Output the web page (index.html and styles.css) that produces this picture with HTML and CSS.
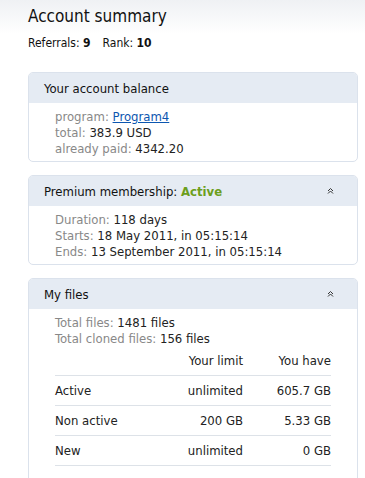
FILE: index.html
```html
<!DOCTYPE html>
<html lang="en">
<head>
    <meta charset="UTF-8">
    <meta name="viewport" content="width=device-width, initial-scale=1.0">
    <title>Account summary</title>
    <link rel="stylesheet" href="styles.css">
</head>
<body>
    <div class="page">
        <h1>Account summary</h1>
        <p class="stats">Referrals: <b>9</b><span class="sep"></span>Rank: <b>10</b></p>

        <div class="box">
            <div class="box-head">Your account balance</div>
            <div class="box-body">
                <div class="row"><span class="lbl">program:</span> <a href="#">Program4</a></div>
                <div class="row"><span class="lbl">total:</span> 383.9 USD</div>
                <div class="row"><span class="lbl">already paid:</span> 4342.20</div>
            </div>
        </div>

        <div class="box">
            <div class="box-head">
                <span>Premium membership: <b class="active">Active</b></span>
                <svg class="toggle" width="7" height="6" viewBox="0 0 7 6"><path d="M1 3 L3.5 0.5 L6 3 M1 5.5 L3.5 3 L6 5.5" fill="none" stroke="#333" stroke-width="1"/></svg>
            </div>
            <div class="box-body">
                <div class="row"><span class="lbl">Duration:</span> 118 days</div>
                <div class="row"><span class="lbl">Starts:</span> 18 May 2011, in 05:15:14</div>
                <div class="row"><span class="lbl">Ends:</span> 13 September 2011, in 05:15:14</div>
            </div>
        </div>

        <div class="box">
            <div class="box-head">
                <span>My files</span>
                <svg class="toggle" width="7" height="6" viewBox="0 0 7 6"><path d="M1 3 L3.5 0.5 L6 3 M1 5.5 L3.5 3 L6 5.5" fill="none" stroke="#333" stroke-width="1"/></svg>
            </div>
            <div class="box-body files-body">
                <div class="row"><span class="lbl">Total files:</span> 1481 files</div>
                <div class="row"><span class="lbl">Total cloned files:</span> 156 files</div>
                <table class="files">
                    <tr><th></th><th>Your limit</th><th>You have</th></tr>
                    <tr><td>Active</td><td>unlimited</td><td>605.7 GB</td></tr>
                    <tr><td>Non active</td><td>200 GB</td><td>5.33 GB</td></tr>
                    <tr><td>New</td><td>unlimited</td><td>0 GB</td></tr>
                </table>
            </div>
        </div>
    </div>
</body>
</html>
```

FILE: styles.css
```css
* {
    margin: 0;
    padding: 0;
    box-sizing: border-box;
}

body {
    font-family: "DejaVu Sans Condensed", "DejaVu Sans", sans-serif;
    font-size: 13px;
    color: #222;
    background: linear-gradient(to bottom, #eff1f4 0px, #ffffff 34px) no-repeat;
    background-color: #fff;
}

.page {
    padding: 5px 7px 0 28px;
}

h1 {
    font-size: 17px;
    font-weight: normal;
    color: #111;
    line-height: 22px;
}

.stats {
    margin-top: 8px;
    font-size: 12px;
    line-height: 16px;
    color: #111;
}

.stats .sep {
    display: inline-block;
    width: 12px;
}

.box {
    border: 1px solid #dbe2ec;
    border-radius: 5px;
    margin-top: 21px;
    overflow: hidden;
}

.box + .box {
    margin-top: 13px;
}

.box-head {
    background: #e5ebf3;
    height: 30px;
    padding: 0 23px 0 15px;
    font-size: 13px;
    color: #111;
    display: flex;
    align-items: center;
    justify-content: space-between;
}

.box-head .active {
    color: #6c9e1c;
}

.box-body {
    padding: 6px 26px 4px 26px;
}

.files-body {
    padding-bottom: 30px;
}

.row {
    line-height: 16px;
}

.lbl {
    color: #888;
}

a {
    color: #0c56b0;
}

.files {
    width: 100%;
    border-collapse: collapse;
}

.files th {
    font-weight: normal;
    text-align: right;
    height: 28px;
    border-bottom: 1px solid #dde2e8;
}

.files td {
    height: 30px;
    text-align: right;
    border-bottom: 1px solid #dde2e8;
}

.files td:first-child {
    text-align: left;
}

.files th:nth-child(3),
.files td:nth-child(3) {
    width: 88px;
}
```
